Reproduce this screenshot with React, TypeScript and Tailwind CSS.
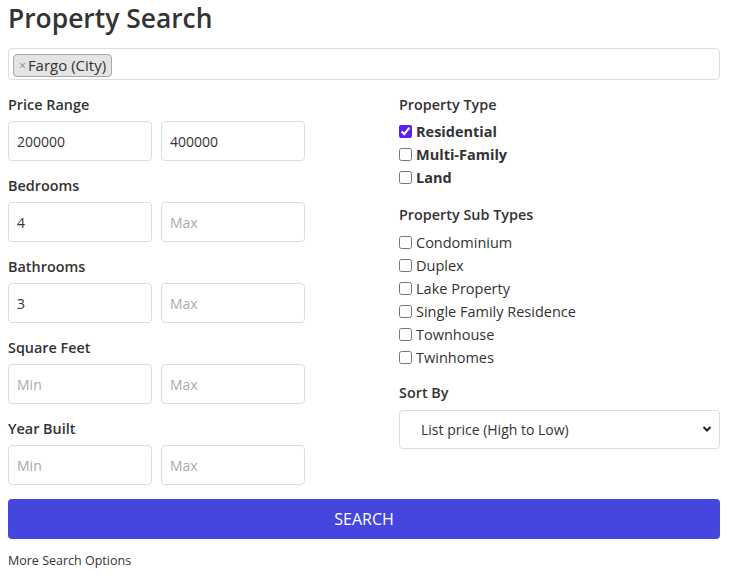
import { useState } from "react";

const font = { fontFamily: '"Open Sans", "Noto Sans", sans-serif' };

const ranges = [
  { label: "Price Range", min: "200000", max: "400000" },
  { label: "Bedrooms", min: "4", max: "" },
  { label: "Bathrooms", min: "3", max: "" },
  { label: "Square Feet", min: "", max: "" },
  { label: "Year Built", min: "", max: "" },
];

const types = ["Residential", "Multi-Family", "Land"];
const subTypes = [
  "Condominium",
  "Duplex",
  "Lake Property",
  "Single Family Residence",
  "Townhouse",
  "Twinhomes",
];

function RangeField({ label, min, max }: { label: string; min: string; max: string }) {
  return (
    <div className="mb-4">
      <div className="h-[18px] mb-[7px] text-[14.4px] font-semibold leading-[18px] text-[#333]">{label}</div>
      <div className="flex gap-[9px]">
        <input
          className="w-[144px] h-10 border border-[#ddd] rounded px-2 text-sm text-[#333] placeholder:text-[#aaa] outline-none"
          placeholder="Min"
          defaultValue={min}
        />
        <input
          className="w-[144px] h-10 border border-[#ddd] rounded px-2 text-sm text-[#333] placeholder:text-[#aaa] outline-none"
          placeholder="Max"
          defaultValue={max}
        />
      </div>
    </div>
  );
}

export default function App() {
  const [checked, setChecked] = useState<string[]>(["Residential"]);

  const toggle = (v: string) =>
    setChecked((c) => (c.includes(v) ? c.filter((x) => x !== v) : [...c, v]));

  return (
    <div className="pl-2 pr-3 bg-white text-[#333] w-[732px]" style={font}>
      <h1 className="text-[26.4px] font-semibold leading-[36px] text-[#333] mb-3">Property Search</h1>

      <div className="h-8 border border-[#ddd] rounded flex items-start pt-[5px] px-1">
        <span className="flex items-center h-[23px] bg-[#e4e4e4] border border-[#aaa] rounded px-[5px] text-[15px] text-[#333]">
          <span className="text-[#888] text-xs mr-[2px]">×</span>
          Fargo (City)
        </span>
      </div>

      <div className="flex mt-4">
        <div className="w-[297px]">
          {ranges.map((r) => (
            <RangeField key={r.label} {...r} />
          ))}
        </div>

        <div className="flex-1 ml-[94px]">
          <div className="h-[18px] text-[14.4px] font-semibold leading-[18px]">Property Type</div>
          <div className="mt-[6px]">
            {types.map((t) => (
              <label key={t} className="flex items-center h-[23px] text-[14.5px] font-bold">
                <input
                  type="checkbox"
                  className="m-0 mr-1 w-[13px] h-[13px] accent-[#5b1ff2]"
                  checked={checked.includes(t)}
                  onChange={() => toggle(t)}
                />
                {t}
              </label>
            ))}
          </div>

          <div className="h-5 mt-4 text-[14.4px] font-semibold leading-5">Property Sub Types</div>
          <div className="mt-[6px]">
            {subTypes.map((t) => (
              <label key={t} className="flex items-center h-[23px] text-[14.5px]">
                <input
                  type="checkbox"
                  className="m-0 mr-1 w-[13px] h-[13px] accent-[#5b1ff2]"
                  checked={checked.includes(t)}
                  onChange={() => toggle(t)}
                />
                {t}
              </label>
            ))}
          </div>

          <div className="h-5 mt-[14px] text-[14.4px] font-semibold leading-5">Sort By</div>
          <div className="relative mt-[7px]">
            <select className="w-full h-[39px] border border-[#ddd] rounded pl-[21px] pr-8 text-sm text-[#333] bg-white appearance-none outline-none">
              <option>List price (High to Low)</option>
              <option>List price (Low to High)</option>
              <option>Newest</option>
            </select>
            <svg
              className="absolute right-[8px] top-[15px] pointer-events-none"
              width="10"
              height="8"
              viewBox="0 0 10 8"
            >
              <path d="M1.5 2 L5 5.5 L8.5 2" fill="none" stroke="#222" strokeWidth="2" />
            </svg>
          </div>
        </div>
      </div>

      <button className="w-full h-10 mt-[-2px] rounded bg-[#4446dd] text-white text-base">SEARCH</button>

      <div className="mt-[13px] text-[12.5px] text-[#333]">More Search Options</div>
    </div>
  );
}
